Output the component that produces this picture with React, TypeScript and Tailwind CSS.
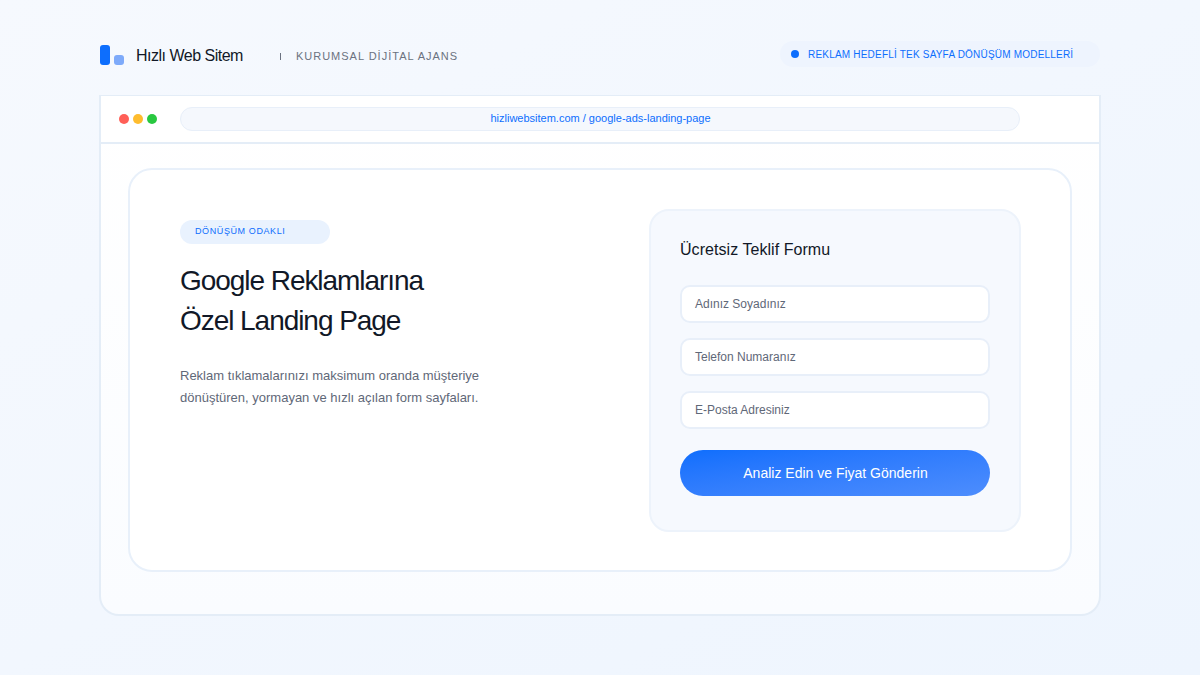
import React from "react";

const fields = ["Adınız Soyadınız", "Telefon Numaranız", "E-Posta Adresiniz"];

const App = () => {
  return (
    <div className="w-[1200px] h-[675px] overflow-hidden flex flex-col px-[100px] bg-gradient-to-br from-[#f6f9fe] to-[#eef5fe] font-['Liberation_Sans',Arial,sans-serif]">
      {/* Top Header */}
      <header className="h-[95px] shrink-0 flex items-center pt-[15px]">
        <div className="flex items-end gap-[4px] w-[25px] h-[20px]">
          <span className="w-[10px] h-[20px] rounded-[3px] bg-[#0d6efd]" />
          <span className="w-[10px] h-[10px] rounded-[3px] bg-[#7eaafa]" />
        </div>
        <span className="ml-[11px] mt-[2px] text-[16px] tracking-[-0.5px] text-[#111827]">Hızlı Web Sitem</span>
        <span className="ml-[37px] mt-[2px] w-px h-[7px] bg-[#6b7280]" />
        <span className="ml-[15px] mt-[2px] text-[11px] tracking-[1px] text-[#6b7280]">KURUMSAL DİJİTAL AJANS</span>
        <div className="ml-auto -mt-[2px] w-[320px] h-[26px] rounded-full bg-[#eef4fe] flex items-center pl-[11px]">
          <span className="w-[8px] h-[8px] rounded-full bg-[#0d6efd]" />
          <span className="ml-[9px] text-[10px] tracking-[0.2px] text-[#0d6efd]">REKLAM HEDEFLİ TEK SAYFA DÖNÜŞÜM MODELLERİ</span>
        </div>
      </header>

      {/* Browser Frame */}
      <div className="-mx-[1px] h-[521px] shrink-0 flex flex-col bg-gradient-to-b from-white to-[#fafcff] border-x-2 border-b-2 border-t border-[#e4edf7] rounded-b-[20px]">
        <div className="h-[48px] shrink-0 flex items-center bg-white border-b-2 border-[#e4edf7] pl-[18px]">
          <div className="flex gap-[4px]">
            <span className="w-[10px] h-[10px] rounded-full bg-[#ff5f57]" />
            <span className="w-[10px] h-[10px] rounded-full bg-[#febc2e]" />
            <span className="w-[10px] h-[10px] rounded-full bg-[#28c840]" />
          </div>
          <div className="ml-[23px] w-[840px] h-[24px] pl-[1px] pb-[1px] rounded-full bg-[#f5f8fd] border border-[#e8eff9] flex items-center justify-center text-[11px] text-[#0d6efd]">
            hizliwebsitem.com / google-ads-landing-page
          </div>
        </div>

        {/* Landing Page Card */}
        <div className="mt-[24px] mx-[27px] h-[404px] bg-white border-2 border-[#e8f0fa] rounded-[24px] flex pl-[50px] pt-[39px]">
          <div className="w-[469px] shrink-0 pt-[11px]">
            <div className="w-[150px] h-[24px] rounded-full bg-[#e9f2fe] flex items-center pl-[15px] text-[9px] tracking-[0.6px] text-[#0d6efd]">
              DÖNÜŞÜM ODAKLI
            </div>
            <h1 className="mt-[17px] text-[28px] leading-[40px] font-normal tracking-[-1.05px] text-[#111827]">
              Google Reklamlarına
              <br />
              Özel Landing Page
            </h1>
            <p className="mt-[24px] text-[13px] leading-[22px] text-[#5f6878]">
              Reklam tıklamalarınızı maksimum oranda müşteriye
              <br />
              dönüştüren, yormayan ve hızlı açılan form sayfaları.
            </p>
          </div>

          {/* Quote Form */}
          <div className="w-[372px] h-[323px] shrink-0 flex flex-col bg-[#f6f9fe] border-2 border-[#edf3fb] rounded-[20px] px-[29px] pt-[28px]">
            <h2 className="text-[16px] leading-[22px] font-normal tracking-[0.05px] text-[#111827]">Ücretsiz Teklif Formu</h2>
            <div className="mt-[24px] flex flex-col gap-[15px]">
              {fields.map((field) => (
                <div
                  key={field}
                  className="h-[38px] flex items-center bg-white border-2 border-[#e8eff9] rounded-[10px] pl-[13px] text-[12px] text-[#5f6878]"
                >
                  {field}
                </div>
              ))}
            </div>
            <button
              type="button"
              className="mt-[21px] h-[46px] pl-[1px] rounded-full bg-gradient-to-br from-[#0d6efd] to-[#4d8dfd] text-[14px] text-white"
            >
              Analiz Edin ve Fiyat Gönderin
            </button>
          </div>
        </div>
      </div>
    </div>
  );
};

export default App;
